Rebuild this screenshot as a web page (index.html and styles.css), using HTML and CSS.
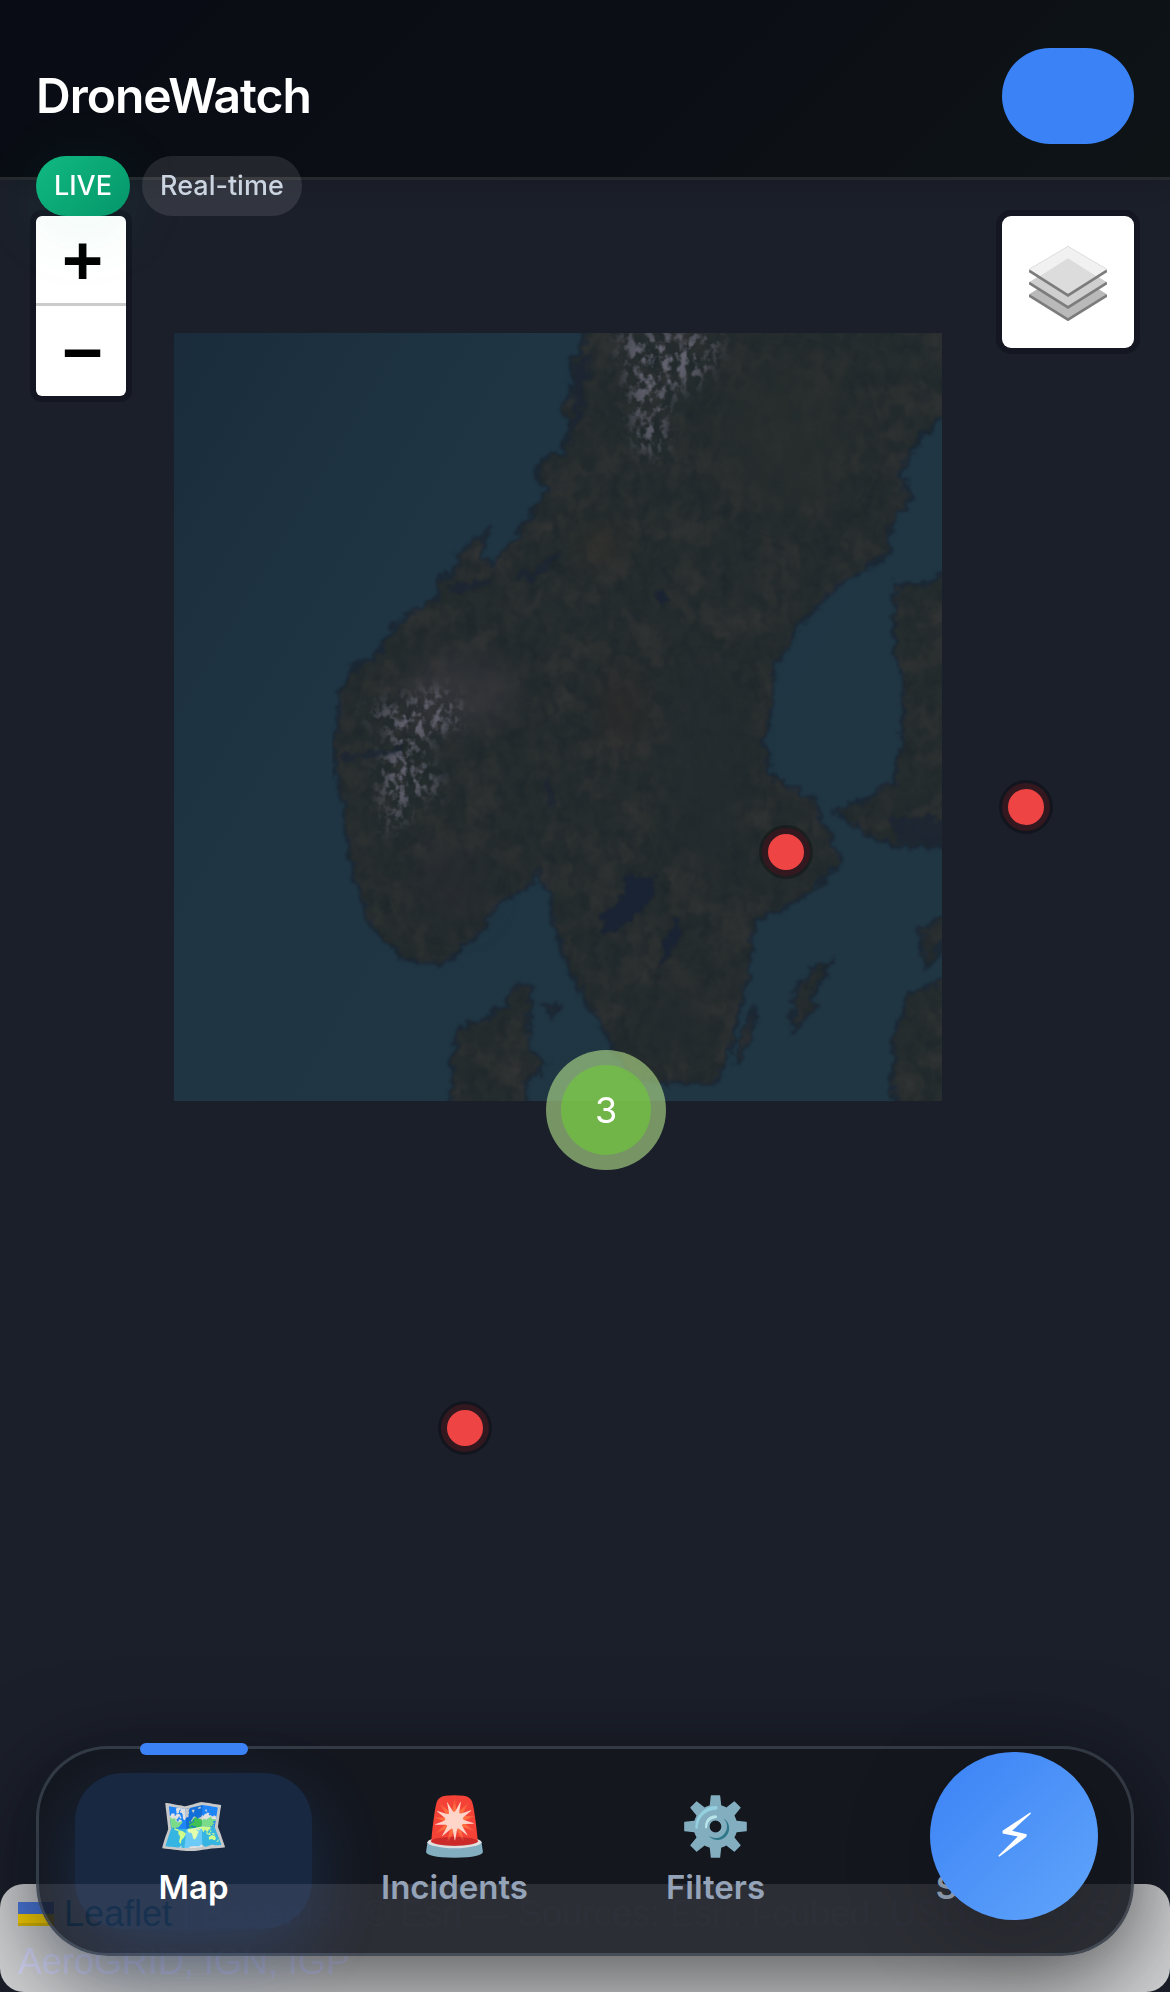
FILE: index.html
```html
<!DOCTYPE html>
<html lang="en">
<head>
<meta charset="utf-8">
<meta name="viewport" content="width=device-width, initial-scale=1">
<title>DroneWatch</title>
<link rel="stylesheet" href="styles.css">
</head>
<body>
<div class="app">
  <section class="map" aria-label="Incident map">
    <div class="map-pane">
      <svg class="tile" viewBox="27 25 1506 1506" aria-hidden="true">
        <defs>
          <filter id="coast" x="0" y="0" width="1" height="1" color-interpolation-filters="sRGB">
            <feTurbulence type="fractalNoise" baseFrequency="0.05" numOctaves="4" seed="4" result="n"/>
            <feDisplacementMap in="SourceGraphic" in2="n" scale="30" xChannelSelector="R" yChannelSelector="G" result="d"/>
            <feGaussianBlur in="d" stdDeviation="2"/>
          </filter>
          <filter id="relief" x="0" y="0" width="1" height="1" color-interpolation-filters="sRGB">
            <feTurbulence type="fractalNoise" baseFrequency="0.012 0.016" numOctaves="6" seed="9" result="n"/>
            <feColorMatrix in="n" type="matrix" values="0 0 0 0 0.23  0 0 0 0 0.22  0 0 0 0 0.22  1.4 0 0 0 -0.55" result="c"/>
            <feComposite in="c" in2="SourceAlpha" operator="in"/>
          </filter>
          <filter id="shade" x="0" y="0" width="1" height="1" color-interpolation-filters="sRGB">
            <feTurbulence type="fractalNoise" baseFrequency="0.05 0.03" numOctaves="5" seed="31" result="n"/>
            <feColorMatrix in="n" type="matrix" values="0 0 0 0 0.1  0 0 0 0 0.14  0 0 0 0 0.16  1.4 0 0 0 -0.55" result="c"/>
            <feComposite in="c" in2="SourceAlpha" operator="in"/>
          </filter>
          <filter id="snow" x="-0.3" y="-0.3" width="1.6" height="1.6" color-interpolation-filters="sRGB">
            <feGaussianBlur in="SourceAlpha" stdDeviation="20" result="b"/>
            <feTurbulence type="fractalNoise" baseFrequency="0.06 0.045" numOctaves="4" seed="17" result="n"/>
            <feColorMatrix in="n" type="matrix" values="0 0 0 0 0.38  0 0 0 0 0.38  0 0 0 0 0.43  5 0 0 0 -2.3" result="c"/>
            <feComposite in="c" in2="b" operator="in"/>
          </filter>
          <filter id="soft" x="-1" y="-1" width="3" height="3" color-interpolation-filters="sRGB"><feGaussianBlur stdDeviation="30"/></filter>
          <linearGradient id="sea" x1="0" y1="0" x2="1" y2="0.6">
            <stop offset="0" stop-color="#1a2c3b"/><stop offset="0.35" stop-color="#1f3543"/><stop offset="1" stop-color="#203643"/>
          </linearGradient>
          <clipPath id="tileclip"><rect x="27" y="25" width="1506" height="1506"/></clipPath>
          <g id="land">
            <path d="M830 0 L834 50 L806 80 L806 140 L788 176 L804 200 L790 262 L748 270 L736 310 L760 330 L730 375 L690 435 L652 482 L628 470 L640 420 L655 405 L612 436 L584 460 L582 495 L548 505 L545 545 L500 570 L460 600 L420 660 L380 680 L350 740 L350 790 L338 830 L345 900 L362 960 L370 1040 L385 1110 L405 1170 L430 1210 L480 1252 L530 1262 L575 1250 L620 1205 L665 1140 L715 1118 L740 1085 L765 1120 L775 1190 L800 1270 L825 1320 L865 1375 L890 1425 L930 1490 L1090 1498 L1115 1440 L1132 1370 L1152 1290 L1160 1210 L1172 1175 L1230 1150 L1290 1110 L1335 1060 L1310 1005 L1290 975 L1290 945 L1235 915 L1195 890 L1184 820 L1200 750 L1205 680 L1250 600 L1320 525 L1380 490 L1425 460 L1435 400 L1470 350 L1450 300 L1490 230 L1530 190 L1560 150 L1560 0 Z"/>
            <path d="M1560 470 L1510 515 L1440 520 L1440 640 L1455 700 L1455 830 L1440 900 L1400 930 L1325 962 L1380 1005 L1440 1030 L1560 1035 Z"/>
            <path d="M570 1560 L570 1450 L585 1390 L640 1370 L680 1340 L700 1305 L732 1310 L718 1370 L725 1430 L755 1455 L735 1480 L715 1500 L715 1560 Z"/>
            <path d="M1436 1560 L1440 1400 L1470 1320 L1560 1285 L1560 1560 Z"/>
            <path d="M1240 1395 L1245 1315 L1275 1275 L1320 1258 L1285 1310 L1280 1350 Z"/>
            <path d="M1126 1465 L1135 1415 L1165 1345 L1158 1400 Z"/>
            <path d="M1505 1270 L1488 1200 L1540 1165 L1540 1210 Z"/>
            <path d="M755 1345 L778 1345 L768 1366 Z"/>
          </g>
        </defs>
        <g clip-path="url(#tileclip)">
          <rect x="27" y="25" width="1506" height="1506" fill="url(#sea)"/>
          <g filter="url(#coast)">
            <use href="#land" fill="#262d2e" stroke="#1b2835" stroke-width="9"/>
            <use href="#land" filter="url(#relief)"/>
            <use href="#land" filter="url(#shade)"/>
          </g>
          <g filter="url(#soft)">
            <ellipse cx="1230" cy="230" rx="130" ry="150" fill="#282e2e" opacity="0.7"/>
            <ellipse cx="1070" cy="880" rx="70" ry="200" fill="#222b2d" opacity="0.7"/>
            <ellipse cx="1010" cy="1370" rx="60" ry="60" fill="#232b2e" opacity="0.7"/>
            <ellipse cx="905" cy="760" rx="30" ry="70" fill="#332b2a" opacity="0.7"/>
            <ellipse cx="870" cy="440" rx="40" ry="35" fill="#35302a" opacity="0.7"/>
            <ellipse cx="570" cy="1110" rx="70" ry="70" fill="#272b30" opacity="0.7"/>
            <ellipse cx="590" cy="730" rx="110" ry="70" fill="#3a393d" opacity="0.6"/>
          </g>
          <g filter="url(#snow)">
            <path d="M900 20 L1100 20 L1070 110 L990 150 L990 260 L940 260 L920 130 Z"/>
            <path d="M490 740 L560 720 L600 780 L500 840 L560 930 L500 930 L450 1020 L430 880 L460 800 L390 770 Z"/>
          </g>
          <g fill="#1a2333" filter="url(#coast)">
            <path d="M908 1090 L965 1092 L960 1145 L920 1180 L870 1205 L865 1160 L905 1135 Z"/>
            <path d="M978 1278 L985 1220 L1015 1170 L1025 1200 L1000 1240 Z"/>
            <path d="M974 536 L995 545 L985 562 Z"/>
            <path d="M755 890 L775 915 L770 960 L752 925 Z" opacity="0.6"/>
            <path d="M690 510 L780 455 L790 462 L730 510 Z" opacity="0.7"/>
            <path d="M560 520 L650 510 L640 520 L570 535 Z" opacity="0.7"/>
            <path d="M350 855 L470 838 L470 848 L360 865 Z" opacity="0.7"/>
            <path d="M810 90 L845 60 L830 160 L806 250 Z" opacity="0.7"/>
            <path d="M1420 970 L1540 980 L1540 1030 L1450 1025 Z" opacity="0.7"/>
          </g>
        </g>
      </svg>
      <button class="pin pin-stockholm" aria-label="Incident"></button>
      <button class="pin pin-helsinki" aria-label="Incident"></button>
      <button class="pin pin-south" aria-label="Incident"></button>
      <button class="cluster"><span class="cluster-count">3</span></button>
    </div>
    <footer class="attribution">
      <svg class="flag" viewBox="0 0 12 8" aria-hidden="true"><path fill="#4C7BE1" d="M0 0h12v4H0z"/><path fill="#FFD500" d="M0 4h12v3H0z"/><path fill="#E0BC00" d="M0 7h12v1H0z"/></svg>
      <a class="attribution-link" href="#">Leaflet</a> | Basemap © Esri — Sources: Esri, i-cubed, USDA, USGS, AeroGRID, IGN, IGP
    </footer>
  </section>

  <header class="topbar">
    <div class="brand">
      <h1 class="brand-name">DroneWatch</h1>
      <div class="badges">
        <span class="badge badge-live">LIVE</span>
        <span class="badge">Real-time</span>
      </div>
    </div>
    <button class="topbar-action" aria-label="Menu"></button>
  </header>

  <div class="map-controls">
    <div class="zoom">
      <button class="zoom-button" aria-label="Zoom in">+</button>
      <button class="zoom-button" aria-label="Zoom out">−</button>
    </div>
    <button class="layers" aria-label="Layers">
      <svg class="layers-icon" viewBox="387 729 234 234" aria-hidden="true">
        <path fill="#b9b9b9" d="M504 812 621 883 504 957 387 883z"/>
        <path fill="none" stroke="#7c7c7c" stroke-width="8" d="M387 886 504 959 621 886"/>
        <path fill="#cfcfcf" d="M504 775 621 847 504 920 387 847z"/>
        <path fill="none" stroke="#7c7c7c" stroke-width="8" d="M387 849 504 922 621 849"/>
        <path fill="#f1f1f1" d="M504 738 621 808 504 884 387 808z"/>
        <path fill="none" stroke="#dedede" stroke-width="3" d="M387 808 504 739 621 808"/>
        <path fill="#dcdcdc" d="M504 775 588 828 504 882 420 828z"/>
        <path fill="none" stroke="#7c7c7c" stroke-width="8" d="M387 812 504 886 621 812"/>
      </svg>
    </button>
  </div>

  <div class="dock">
    <nav class="tabs" aria-label="Main">
      <a class="tab tab-active" href="#"><span class="tab-icon">🗺️</span><span class="tab-label">Map</span></a>
      <a class="tab" href="#"><span class="tab-icon">🚨</span><span class="tab-label">Incidents</span></a>
      <a class="tab" href="#"><span class="tab-icon">⚙️</span><span class="tab-label">Filters</span></a>
      <a class="tab" href="#"><span class="tab-icon">📊</span><span class="tab-label">Stats</span></a>
    </nav>
    <button class="fab" aria-label="Quick actions">
      <svg class="fab-icon" viewBox="650 334 104 136" aria-hidden="true"><path fill="#fff" d="M750 335 666 391 666 399 712 408 653 466 656 469 738 409 739 401 695 391 751 339z"/></svg>
    </button>
  </div>
</div>
</body>
</html>
```
FILE: styles.css
```css
* { box-sizing: border-box; }

body {
  margin: 0;
  background: #1b1f2a;
  font-family: Inter, "Noto Sans", sans-serif;
}

button {
  padding: 0;
  border: 0;
  font: inherit;
  cursor: pointer;
}

.app {
  position: relative;
  display: flex;
  flex-direction: column;
  min-height: 100vh;
  overflow: hidden;
}

/* Map canvas */
.map {
  position: absolute;
  inset: 0;
}

.map-pane {
  position: absolute;
  top: 0;
  left: 50%;
}

.tile {
  position: absolute;
  top: 333px;
  left: -411px;
  width: 768px;
  height: 768px;
}

.pin {
  position: absolute;
  width: 48px;
  height: 48px;
  border: 6px solid #33181f;
  border-radius: 50%;
  background: #ef4444;
  box-shadow: 0 0 0 3px rgba(0, 0, 0, 0.3);
}

.pin-stockholm { top: 828px; left: 177px; }
.pin-helsinki { top: 783px; left: 417px; }
.pin-south { top: 1404px; left: -144px; }

.cluster {
  position: absolute;
  top: 1050px;
  left: -39px;
  display: grid;
  place-items: center;
  width: 120px;
  height: 120px;
  border-radius: 50%;
  background: rgba(181, 226, 140, 0.6);
}

.cluster-count {
  width: 90px;
  border-radius: 50%;
  background: rgba(110, 204, 57, 0.6);
  color: #fff;
  font-size: 36px;
  line-height: 90px;
}

.attribution {
  position: absolute;
  right: 0;
  bottom: 0;
  left: 0;
  padding: 6px 18px;
  border-radius: 24px;
  background: rgba(255, 255, 255, 0.8);
  color: #d4d6f6;
  font: 36px/48px "Liberation Sans", Arial, sans-serif;
}

.attribution-link {
  color: #0078a8;
  text-decoration: none;
}

.flag {
  width: 36px;
  height: 24px;
}

/* Header */
.topbar {
  position: relative;
  z-index: 2;
  display: flex;
  justify-content: space-between;
  height: 180px;
  padding: 48px 36px 0;
  border-bottom: 3px solid #26292d;
  background: linear-gradient(135deg, #090c14, #0b0e15 50%, #0e1416);
  box-shadow: 0 3px 24px rgba(0, 0, 0, 0.15);
}

.brand-name {
  margin: 0 0 12px;
  color: #fff;
  font-size: 48px;
  font-weight: 600;
  line-height: 96px;
  letter-spacing: -1px;
}

.badges {
  display: flex;
  gap: 12px;
}

.badge {
  padding: 0 18px;
  border-radius: 30px;
  background: rgba(255, 255, 255, 0.1);
  color: #cbd5e1;
  font-size: 27px;
  font-weight: 500;
  line-height: 60px;
}

.badge-live {
  background: linear-gradient(135deg, #10b981, #059669);
  box-shadow: 0 12px 72px rgba(16, 185, 129, 0.1);
  color: #fff;
}

.topbar-action {
  width: 132px;
  height: 96px;
  border-radius: 48px;
  background: #3b82f6;
}

/* Map controls */
.map-controls {
  position: relative;
  display: flex;
  justify-content: space-between;
  align-items: flex-start;
  padding: 36px 36px 0;
}

.zoom {
  display: flex;
  flex-direction: column;
  width: 90px;
  border-radius: 6px;
  background: #fff;
  box-shadow: 0 0 0 6px #141722;
}

.zoom-button {
  height: 90px;
  background: none;
  color: #000;
  font: bold 66px/87px "DejaVu Sans Mono", monospace;
  text-indent: 3px;
}

.zoom-button:first-child { border-bottom: 3px solid #ccc; }

.layers {
  display: grid;
  place-items: center;
  width: 132px;
  height: 132px;
  border-radius: 9px;
  background: #fff;
  box-shadow: 0 0 0 6px #141722;
}

.layers-icon {
  width: 78px;
  height: 78px;
}

/* Bottom dock */
.dock {
  position: relative;
  margin: auto 36px 36px;
}

.tabs {
  display: grid;
  grid-template-columns: repeat(4, 1fr);
  gap: 24px;
  padding: 24px 36px;
  border: 3px solid rgba(148, 163, 184, 0.25);
  border-radius: 72px;
  background: rgba(19, 22, 29, 0.87);
  box-shadow: 0 24px 96px rgba(0, 0, 0, 0.6);
}

.tab {
  position: relative;
  display: flex;
  flex-direction: column;
  align-items: center;
  gap: 3px;
  height: 156px;
  padding: 12px 0;
  border-radius: 48px;
  color: #94a3b8;
  text-decoration: none;
}

.tab-active {
  background: rgba(59, 130, 246, 0.16);
  box-shadow: 0 24px 72px rgba(59, 130, 246, 0.2);
  color: #fff;
}

.tab-active::before {
  content: "";
  position: absolute;
  top: -30px;
  left: 50%;
  width: 108px;
  height: 12px;
  margin-left: -54px;
  border-radius: 6px;
  background: #3b82f6;
}

.tab-icon {
  font-size: 57px;
  line-height: 81px;
}

.tab-label {
  font-size: 33px;
  font-weight: 600;
  line-height: 36px;
}

.fab {
  position: absolute;
  top: 6px;
  right: 36px;
  display: grid;
  place-items: center;
  width: 168px;
  height: 168px;
  padding-bottom: 3px;
  border-radius: 50%;
  background: linear-gradient(135deg, #3b82f6, #60a5fa);
  box-shadow: 0 24px 96px rgba(0, 0, 0, 0.2);
}

.fab-icon {
  width: 35px;
  height: 45px;
}
```
